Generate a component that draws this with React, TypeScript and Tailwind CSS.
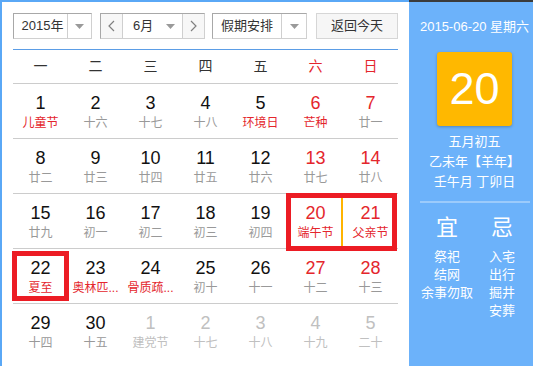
import React from 'react';

type Cell = {
  n: number;
  sub: string;
  red?: boolean; // number in red (weekend)
  fest?: boolean; // lunar line is a festival, shown red
  other?: boolean; // day of another month
  today?: boolean;
};

const weeks: Cell[][] = [
  [
    { n: 1, sub: '儿童节', fest: true },
    { n: 2, sub: '十六' },
    { n: 3, sub: '十七' },
    { n: 4, sub: '十八' },
    { n: 5, sub: '环境日', fest: true },
    { n: 6, sub: '芒种', red: true, fest: true },
    { n: 7, sub: '廿一', red: true },
  ],
  [
    { n: 8, sub: '廿二' },
    { n: 9, sub: '廿三' },
    { n: 10, sub: '廿四' },
    { n: 11, sub: '廿五' },
    { n: 12, sub: '廿六' },
    { n: 13, sub: '廿七', red: true },
    { n: 14, sub: '廿八', red: true },
  ],
  [
    { n: 15, sub: '廿九' },
    { n: 16, sub: '初一' },
    { n: 17, sub: '初二' },
    { n: 18, sub: '初三' },
    { n: 19, sub: '初四' },
    { n: 20, sub: '端午节', red: true, fest: true, today: true },
    { n: 21, sub: '父亲节', red: true, fest: true },
  ],
  [
    { n: 22, sub: '夏至', fest: true },
    { n: 23, sub: '奥林匹...', fest: true },
    { n: 24, sub: '骨质疏...', fest: true },
    { n: 25, sub: '初十' },
    { n: 26, sub: '十一' },
    { n: 27, sub: '十二', red: true },
    { n: 28, sub: '十三', red: true },
  ],
  [
    { n: 29, sub: '十四' },
    { n: 30, sub: '十五' },
    { n: 1, sub: '建党节', other: true },
    { n: 2, sub: '十七', other: true },
    { n: 3, sub: '十八', other: true },
    { n: 4, sub: '十九', other: true },
    { n: 5, sub: '二十', other: true },
  ],
];

const Caret = () => (
  <svg width="9" height="5" viewBox="0 0 9 5">
    <path d="M0 0h9L4.5 5z" fill="#9a9a9a" />
  </svg>
);

const Chevron = ({ dir }: { dir: 'l' | 'r' }) => (
  <svg width="7" height="12" viewBox="0 0 7 12">
    <polyline
      points={dir === 'l' ? '6,1 1,6 6,11' : '1,1 6,6 1,11'}
      fill="none"
      stroke="#808080"
      strokeWidth="1.2"
    />
  </svg>
);

function DayCell({ c }: { c: Cell }) {
  const num = c.other ? 'text-[#c0c0c0]' : c.red ? 'text-[#e4262c]' : 'text-[#111]';
  const sub = c.other ? 'text-[#c0c0c0]' : c.fest ? 'text-[#e4262c]' : 'text-[#999]';
  return (
    <div
      className={
        'flex w-[55px] flex-col items-center ' +
        (c.today ? 'border-2 border-[#ffb400] pt-[7px]' : 'pt-[9px]')
      }
    >
      <div className={'text-[18px] leading-[20px] ' + num}>{c.n}</div>
      <div className={'whitespace-nowrap text-[12px] leading-[20px] ' + sub}>{c.sub}</div>
    </div>
  );
}

export default function App() {
  return (
    <div className="relative flex h-[366px] w-[533px] overflow-hidden bg-white font-['Liberation_Sans','Noto_Sans_CJK_SC',sans-serif]">
      {/* calendar */}
      <div className="h-full w-[409px] border-l-2 border-t-2 border-[#5aa8f6] pl-[11px] pt-[11px]">
        <div className="flex h-[26px] w-[385px] text-[13px] text-[#333]">
          <div className="flex w-[79px] border border-b-[#d0d0d0] border-l-[#a8a8a8] border-r-[#d0d0d0] border-t-[#a8a8a8]">
            <div className="flex flex-1 items-center justify-center pl-[4px]">2015年</div>
            <div className="flex w-[24px] items-center justify-center border-l border-[#cfcfcf]">
              <Caret />
            </div>
          </div>
          <div className="ml-[8px] flex w-[105px] border border-b-[#d0d0d0] border-l-[#a8a8a8] border-r-[#d0d0d0] border-t-[#a8a8a8]">
            <div className="flex w-[22px] items-center justify-center border-r border-[#cfcfcf] bg-[#f7f7f7]">
              <Chevron dir="l" />
            </div>
            <div className="flex flex-1 items-center pl-[10px]">
              <span className="flex-1">6月</span>
              <span className="mr-[7px] flex">
                <Caret />
              </span>
            </div>
            <div className="flex w-[22px] items-center justify-center border-l border-[#cfcfcf] bg-[#f7f7f7]">
              <Chevron dir="r" />
            </div>
          </div>
          <div className="ml-[7px] flex w-[95px] border border-b-[#d0d0d0] border-l-[#a8a8a8] border-r-[#d0d0d0] border-t-[#a8a8a8]">
            <div className="flex flex-1 items-center justify-center">假期安排</div>
            <div className="flex w-[25px] items-center justify-center border-l border-[#cfcfcf]">
              <Caret />
            </div>
          </div>
          <div className="ml-[9px] flex w-[82px] items-center justify-center border border-[#d6d6d6] bg-[#f6f6f6]">
            返回今天
          </div>
        </div>

        <div className="mt-[10px] h-px w-[385px] bg-[#5b9de6]" />

        <div className="grid h-[34px] w-[385px] grid-cols-7 items-center border-b border-[#cccccc] text-[14px] text-[#333]">
          {['一', '二', '三', '四', '五', '六', '日'].map((d, i) => (
            <div key={d} className={'text-center ' + (i > 4 ? 'text-[#e4262c]' : '')}>
              {d}
            </div>
          ))}
        </div>

        {weeks.map((w, i) => (
          <div
            key={i}
            className={'flex h-[55px] w-[385px] ' + (i < weeks.length - 1 ? 'border-b border-[#cccccc]' : '')}
          >
            {w.map((c, j) => (
              <DayCell key={j} c={c} />
            ))}
          </div>
        ))}
      </div>

      {/* side panel */}
      <div className="flex h-full w-[124px] flex-col items-center border-t-2 border-[#3b3b3b] bg-[#6cb2fa] pl-[7px] pt-[16px] text-white">
        <div className="text-[13px] leading-[18px]">2015-06-20 星期六</div>
        <div className="mt-[16px] flex h-[74px] w-[75px] items-center justify-center rounded-[3px] bg-[#ffb800] text-[45px] shadow-[0_1px_3px_rgba(0,0,0,0.25)]">
          20
        </div>
        <div className="mt-[6px] text-center text-[13px] leading-[20px]">
          <div>五月初五</div>
          <div>乙未年【羊年】</div>
          <div>壬午月 丁卯日</div>
        </div>
        <div className="mt-[9px] h-[2px] w-[110px] bg-[#9ccbfb]" />
        <div className="mt-[12px] grid w-[110px] grid-cols-2 text-center text-[22px] leading-[26px]">
          <div>宜</div>
          <div>忌</div>
        </div>
        <div className="mt-[7px] grid w-[110px] grid-cols-2 text-center text-[13px] leading-[18px]">
          <div>
            <div>祭祀</div>
            <div>结网</div>
            <div>余事勿取</div>
          </div>
          <div>
            <div>入宅</div>
            <div>出行</div>
            <div>掘井</div>
            <div>安葬</div>
          </div>
        </div>
      </div>

      {/* red highlight marks drawn over the page */}
      <div className="absolute left-[12px] top-[251px] h-[50px] w-[57px] border-[5px] border-[#ec1c24]" />
      <div className="absolute left-[286px] top-[193px] h-[58px] w-[111px] border-[5px] border-[#ec1c24]" />
    </div>
  );
}
